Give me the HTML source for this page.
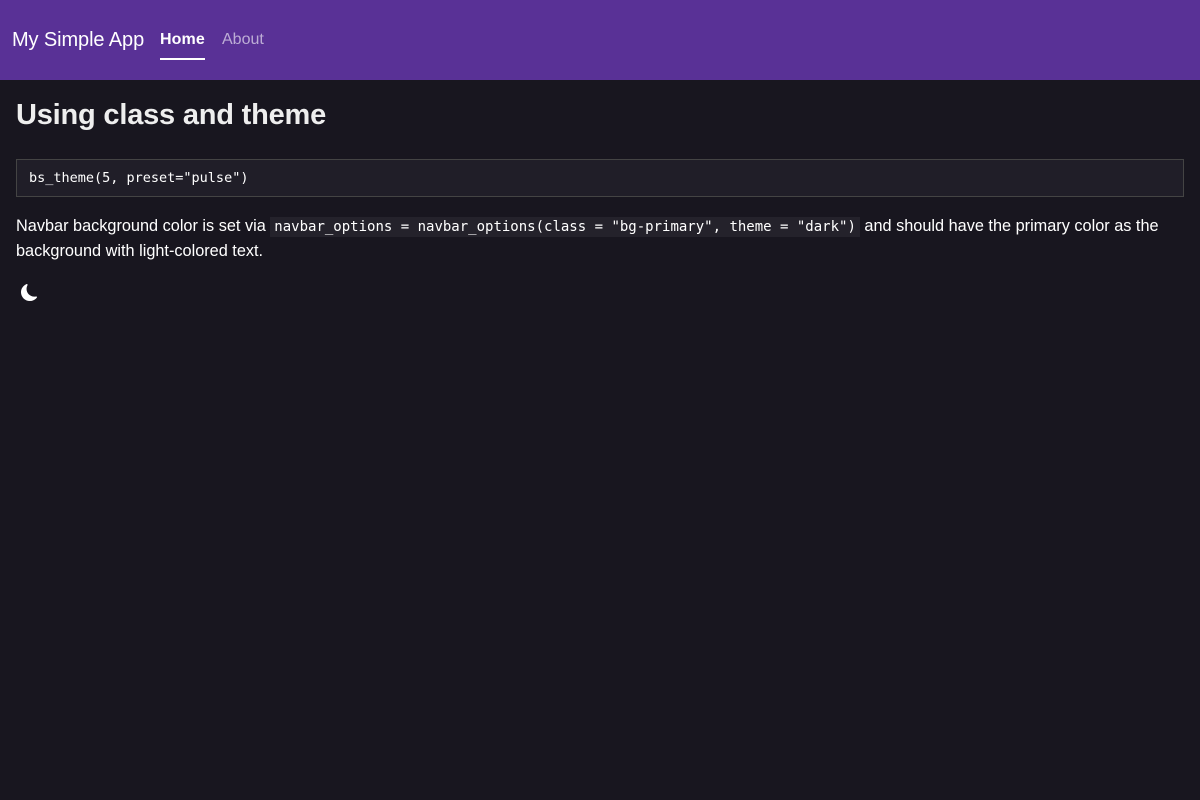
<!DOCTYPE html>
<html><head><style>
body{margin:0;background:#18161f;color:#fff;font-family:"Liberation Sans",sans-serif;width:1200px;height:800px;overflow:hidden}
nav{background:#593196;height:80px;position:relative}
.brand{position:absolute;left:12px;top:29px;font-size:20px;color:#fff;letter-spacing:-0.1px}
.home{position:absolute;left:160px;top:31px;font-size:16px;font-weight:bold;color:#fff;letter-spacing:0.1px}
.home:after{content:"";position:absolute;left:0;right:0;top:27px;height:2px;background:#fff}
.about{position:absolute;left:222px;top:31px;font-size:16px;color:rgba(255,255,255,.6)}
h1{position:absolute;left:16px;top:99px;margin:0;font-size:29px;font-weight:bold;color:#eee;letter-spacing:-0.2px}
pre{position:absolute;left:16px;top:159px;width:1168px;height:38px;margin:0;box-sizing:border-box;border:1px solid #444;background:#201e28;font-family:"DejaVu Sans Mono",monospace;font-size:13.5px;padding:10px 12px;color:#fff}
p{position:absolute;left:16px;top:214px;width:1170px;margin:0;font-size:16.3px;line-height:24px;color:#fff}
code{font-family:"DejaVu Sans Mono",monospace;font-size:14px;background:#24222b;padding:2px 4px}
.moon{position:absolute;left:21px;top:284px}
</style></head><body>
<nav><span class="brand">My Simple App</span><span class="home">Home</span><span class="about">About</span></nav>
<h1>Using class and theme</h1>
<pre>bs_theme(5, preset="pulse")</pre>
<p>Navbar background color is set via <code>navbar_options = navbar_options(class = "bg-primary", theme = "dark")</code> and should have the primary color as the background with light-colored text.</p>
<svg class="moon" width="17" height="17" viewBox="0 0 16 16"><path fill="#fff" d="M6 .278a.77.77 0 0 1 .08.858 7.2 7.2 0 0 0-.878 3.46c0 4.021 3.278 7.277 7.318 7.277q.792-.001 1.533-.16a.79.79 0 0 1 .81.316.73.73 0 0 1-.031.893A8.35 8.35 0 0 1 8.344 16C3.734 16 0 12.286 0 7.71 0 4.266 2.114 1.312 5.124.06A.75.75 0 0 1 6 .278"/></svg>
</body></html>
